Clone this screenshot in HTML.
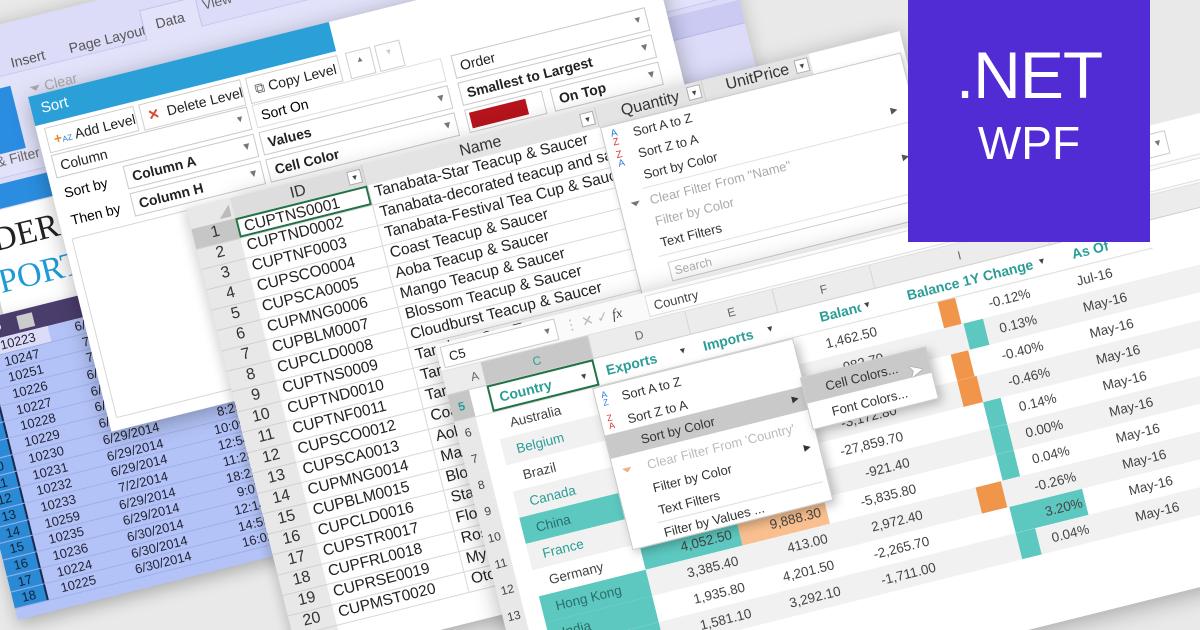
<!DOCTYPE html>
<html><head><meta charset="utf-8"><style>
*{margin:0;padding:0;box-sizing:border-box}
html{width:1200px;height:630px;overflow:hidden}
body{width:1200px;height:630px;overflow:hidden;background:#e9e9e9;font-family:"Liberation Sans",sans-serif;position:relative}
.a{position:absolute}
.p{position:absolute;transform-origin:0 0;transform:rotate(-14deg)}
.r{position:absolute;left:0;display:flex;white-space:nowrap}
.r>div{height:100%;overflow:hidden;position:relative}
.dd{position:absolute;border:1px solid #c9c9c9;background:#fff;font-size:14px;color:#222;padding:3px 6px;white-space:nowrap}
.dd:after{content:"▾";position:absolute;right:6px;top:3px;color:#777;font-size:11px}
.btn{position:absolute;border:1px solid #cfcfcf;background:#fff;font-size:14px;color:#222;padding:4px 6px;white-space:nowrap}
.mi{position:absolute;font-size:13px;color:#333;white-space:nowrap}
.fa{display:inline-block;width:14px;height:14px;border:1px solid #aaa;background:#fff;font-size:9px;line-height:12px;text-align:center;color:#444;position:absolute}
</style></head><body>
<div class="a" style="left:0;top:0;width:1200px;height:630px;overflow:hidden">

<!-- Panel A: left spreadsheet -->
<div class="p" style="left:-60px;top:60px;width:790px;height:560px;">
  <div class="a" style="left:0;top:-20px;width:790px;height:285px;background:#dcdcf8;box-shadow:0 0 18px rgba(0,0,0,.2)"></div>
  <div class="a" style="left:0;top:30px;width:790px;height:100px;background:#e2e2fa;border-top:1px solid #c8c8ee;border-bottom:1px solid #c8c8ee"></div>
  <div class="a" style="left:68px;top:12px;font-size:14px;color:#555">Insert</div>
  <div class="a" style="left:128px;top:12px;font-size:14px;color:#555">Page Layout</div>
  <div class="a" style="left:205px;top:0;width:58px;height:31px;border:1px solid #c3c3e8;border-bottom:none;background:#e2e2fa;font-size:14px;color:#555;padding:8px 0 0 12px">Data</div>
  <div class="a" style="left:268px;top:2px;font-size:14px;color:#666">View</div>
  <div class="a" style="left:28px;top:42px;width:34px;height:64px;background:#2b8de0"></div>
  <div class="a" style="left:80px;top:42px;font-size:14px;color:#aaa">⏷ Clear</div>
  <div class="a" style="left:30px;top:105px;font-size:14px;color:#666">&amp; Filter</div>
  <div class="a" style="left:0;top:135px;width:790px;height:24px;background:#cacaf2;border-bottom:1px solid #b8b8e6"></div>
  <div class="a" style="left:0;top:135px;width:120px;height:24px;background:#2b8de0"></div>
  <div class="a" style="left:600px;top:135px;width:92px;height:24px;background:#2b8de0;color:#123;font-size:13px;text-align:center;line-height:24px">H</div>
  <div class="a" style="left:0;top:160px;width:400px;height:105px;background:#fff"></div>
  <div class="a" style="left:-40px;top:170px;font-family:'Liberation Serif',serif;font-size:34px;color:#222">ORDERS</div>
  <div class="a" style="left:-40px;top:212px;font-family:'Liberation Serif',serif;font-size:34px;color:#1e9ad6">REPORT</div>
  <div class="a" style="left:-60px;top:262px;width:275px;height:300px;background:#b3c3f7;box-shadow:0 6px 16px rgba(0,0,0,.25)"></div>
  <div class="r" style="left:-60px;top:262px;height:22px;width:275px;background:#4a3d6c;color:#fff;font-size:12px;font-weight:bold">
    <div style="width:35px;background:#1e2a4c"></div><div style="width:65px;padding:4px 0 0 8px">ID <span style="display:inline-block;width:16px;height:14px;background:#ccc;vertical-align:middle;margin-left:14px"></span></div>
  </div>
  <div class="a" style="left:-60px;top:284px;width:275px;font-size:13px;color:#223">
    <div style="display:flex;height:16.7px;border-bottom:1px solid #9fb0e8"><div style="width:35px;background:#2a8ad6;border-right:2px solid #1d2a4a;text-align:center;color:#123">3</div><div style="width:65px;text-align:center;background:#dcdcf8">10223</div><div style="width:110px;text-align:center">6/30/2014</div><div style="width:65px;text-align:right;padding-right:6px">9:12</div></div>
    <div style="display:flex;height:16.7px;border-bottom:1px solid #9fb0e8"><div style="width:35px;background:#2a8ad6;border-right:2px solid #1d2a4a;text-align:center;color:#123">4</div><div style="width:65px;text-align:center">10247</div><div style="width:110px;text-align:center">7/1/2014</div><div style="width:65px;text-align:right;padding-right:6px">11:05</div></div>
    <div style="display:flex;height:16.7px;border-bottom:1px solid #9fb0e8"><div style="width:35px;background:#2a8ad6;border-right:2px solid #1d2a4a;text-align:center;color:#123">5</div><div style="width:65px;text-align:center">10251</div><div style="width:110px;text-align:center">7/1/2014</div><div style="width:65px;text-align:right;padding-right:6px">13:48</div></div>
    <div style="display:flex;height:16.7px;border-bottom:1px solid #9fb0e8"><div style="width:35px;background:#2a8ad6;border-right:2px solid #1d2a4a;text-align:center;color:#123">6</div><div style="width:65px;text-align:center">10226</div><div style="width:110px;text-align:center">6/30/2014</div><div style="width:65px;text-align:right;padding-right:6px">16:20</div></div>
    <div style="display:flex;height:16.7px;border-bottom:1px solid #9fb0e8"><div style="width:35px;background:#2a8ad6;border-right:2px solid #1d2a4a;text-align:center;color:#123">7</div><div style="width:65px;text-align:center">10227</div><div style="width:110px;text-align:center">6/30/2014</div><div style="width:65px;text-align:right;padding-right:6px">8:55</div></div>
    <div style="display:flex;height:16.7px;border-bottom:1px solid #9fb0e8"><div style="width:35px;background:#2a8ad6;border-right:2px solid #1d2a4a;text-align:center;color:#123">8</div><div style="width:65px;text-align:center">10228</div><div style="width:110px;text-align:center">6/29/2014</div><div style="width:65px;text-align:right;padding-right:6px">10:31</div></div>
    <div style="display:flex;height:16.7px;border-bottom:1px solid #9fb0e8"><div style="width:35px;background:#2a8ad6;border-right:2px solid #1d2a4a;text-align:center;color:#123">9</div><div style="width:65px;text-align:center">10229</div><div style="width:110px;text-align:center">6/29/2014</div><div style="width:65px;text-align:right;padding-right:6px">14:40</div></div>
    <div style="display:flex;height:16.7px;border-bottom:1px solid #9fb0e8"><div style="width:35px;background:#2a8ad6;border-right:2px solid #1d2a4a;text-align:center;color:#123">10</div><div style="width:65px;text-align:center">10230</div><div style="width:110px;text-align:center">6/29/2014</div><div style="width:65px;text-align:right;padding-right:6px">8:25</div></div>
    <div style="display:flex;height:16.7px;border-bottom:1px solid #9fb0e8"><div style="width:35px;background:#2a8ad6;border-right:2px solid #1d2a4a;text-align:center;color:#123">11</div><div style="width:65px;text-align:center">10231</div><div style="width:110px;text-align:center">6/29/2014</div><div style="width:65px;text-align:right;padding-right:6px">10:09</div></div>
    <div style="display:flex;height:16.7px;border-bottom:1px solid #9fb0e8"><div style="width:35px;background:#2a8ad6;border-right:2px solid #1d2a4a;text-align:center;color:#123">12</div><div style="width:65px;text-align:center">10232</div><div style="width:110px;text-align:center">6/29/2014</div><div style="width:65px;text-align:right;padding-right:6px">12:54</div></div>
    <div style="display:flex;height:16.7px;border-bottom:1px solid #9fb0e8"><div style="width:35px;background:#2a8ad6;border-right:2px solid #1d2a4a;text-align:center;color:#123">13</div><div style="width:65px;text-align:center">10233</div><div style="width:110px;text-align:center">7/2/2014</div><div style="width:65px;text-align:right;padding-right:6px">11:28</div></div>
    <div style="display:flex;height:16.7px;border-bottom:1px solid #9fb0e8"><div style="width:35px;background:#2a8ad6;border-right:2px solid #1d2a4a;text-align:center;color:#123">14</div><div style="width:65px;text-align:center">10259</div><div style="width:110px;text-align:center">6/29/2014</div><div style="width:65px;text-align:right;padding-right:6px">18:22</div></div>
    <div style="display:flex;height:16.7px;border-bottom:1px solid #9fb0e8"><div style="width:35px;background:#2a8ad6;border-right:2px solid #1d2a4a;text-align:center;color:#123">15</div><div style="width:65px;text-align:center">10235</div><div style="width:110px;text-align:center">6/29/2014</div><div style="width:65px;text-align:right;padding-right:6px">9:07</div></div>
    <div style="display:flex;height:16.7px;border-bottom:1px solid #9fb0e8"><div style="width:35px;background:#2a8ad6;border-right:2px solid #1d2a4a;text-align:center;color:#123">16</div><div style="width:65px;text-align:center">10236</div><div style="width:110px;text-align:center">6/30/2014</div><div style="width:65px;text-align:right;padding-right:6px">12:14</div></div>
    <div style="display:flex;height:16.7px;border-bottom:1px solid #9fb0e8"><div style="width:35px;background:#2a8ad6;border-right:2px solid #1d2a4a;text-align:center;color:#123">17</div><div style="width:65px;text-align:center">10224</div><div style="width:110px;text-align:center">6/30/2014</div><div style="width:65px;text-align:right;padding-right:6px">14:55</div></div>
    <div style="display:flex;height:16.7px;border-bottom:1px solid #9fb0e8"><div style="width:35px;background:#2a8ad6;border-right:2px solid #1d2a4a;text-align:center;color:#123">18</div><div style="width:65px;text-align:center">10225</div><div style="width:110px;text-align:center">6/30/2014</div><div style="width:65px;text-align:right;padding-right:6px">16:02</div></div>
  </div>
</div>

<!-- Panel B: Sort dialog -->
<div class="p" style="left:28px;top:97px;width:640px;height:345px;background:#fff;box-shadow:0 4px 22px rgba(0,0,0,.3)">
  <div class="a" style="left:0;top:0;width:310px;height:30px;background:#2b9fd8;color:#fff;font-size:15px;padding:6px 10px">Sort</div>
  <div class="btn" style="left:8px;top:34px;width:92px"><span style="color:#e8892b;font-weight:bold">+</span><span style="font-size:8px;color:#2b7fd8">AZ</span> Add Level</div>
  <div class="btn" style="left:105px;top:34px;width:105px"><span style="color:#d84a2b;font-weight:bold">✕</span>&nbsp; Delete Level</div>
  <div class="btn" style="left:215px;top:34px;width:95px"><span style="color:#666">⧉</span> Copy Level</div>
  <div class="btn" style="left:318px;top:34px;width:26px;height:27px;font-size:8px;color:#777;text-align:center">▲</div>
  <div class="btn" style="left:348px;top:34px;width:26px;height:27px;font-size:8px;color:#ccc;text-align:center">▼</div>
  <div class="dd" style="left:8px;top:62px;width:202px;height:24px">Column</div>
  <div class="a" style="left:215px;top:62px;width:195px;height:24px;border:1px solid #ddd;font-size:14px;padding:3px 6px">Sort On</div>
  <div class="dd" style="left:420px;top:62px;width:200px;height:24px">Order</div>
  <div class="a" style="left:12px;top:94px;font-size:14px">Sort by</div>
  <div class="dd" style="left:75px;top:90px;width:135px;height:24px;font-weight:bold">Column A</div>
  <div class="dd" style="left:215px;top:90px;width:195px;height:24px;font-weight:bold">Values</div>
  <div class="dd" style="left:420px;top:90px;width:200px;height:24px;font-weight:bold">Smallest to Largest</div>
  <div class="a" style="left:12px;top:122px;font-size:14px">Then by</div>
  <div class="dd" style="left:75px;top:118px;width:135px;height:24px;font-weight:bold">Column H</div>
  <div class="dd" style="left:215px;top:118px;width:195px;height:24px;font-weight:bold">Cell Color</div>
  <div class="a" style="left:420px;top:118px;width:80px;height:24px;border:1px solid #ccc;background:#fff"><div style="margin:3px;width:58px;height:16px;background:#b5141c"></div></div>
  <div class="dd" style="left:508px;top:118px;width:112px;height:24px;font-weight:bold">On Top</div>
  <div class="a" style="left:8px;top:148px;width:620px;height:185px;border:1px solid #d6d6d6"></div>
</div>

<!-- Panel C: ID / Name grid -->
<div class="p" style="left:230px;top:198px;width:690px;height:470px;background:#fff;box-shadow:0 4px 22px rgba(0,0,0,.3)">
  <div class="a" style="left:-45px;top:0;width:45px;height:470px;background:#e8e8e8;box-shadow:-4px 0 10px rgba(0,0,0,.15)"></div>
  <div class="a" style="left:-45px;top:0;width:45px;height:21px;background:#e8e8e8"><div style="position:absolute;right:3px;bottom:3px;width:0;height:0;border-left:12px solid transparent;border-bottom:12px solid #bbb"></div></div>
  <div class="r" style="top:0;height:21px;font-size:16px;color:#333;background:#ddd">
    <div style="width:136px;text-align:center;line-height:21px;border-right:1px solid #ccc">ID<span class="fa" style="right:2px;top:3px">▾</span></div>
    <div style="width:240px;text-align:center;line-height:21px;border-right:1px solid #ccc;background:#e4e4e4">Name<span class="fa" style="right:2px;top:3px">▾</span></div>
    <div style="width:110px;text-align:center;line-height:21px;border-right:1px solid #ccc;background:#e4e4e4">Quantity<span class="fa" style="right:2px;top:3px">▾</span></div>
    <div style="width:110px;text-align:center;line-height:21px;background:#e4e4e4">UnitPrice<span class="fa" style="right:2px;top:3px">▾</span></div>
  </div>
  <div class="a" style="left:0;top:21px;width:376px;font-size:15.5px;color:#222">
    <div style="display:flex;height:21px;border-bottom:1px solid #d8d8d8"><div style="width:136px;padding-left:5px;border:2px solid #217346">CUPTNS0001</div><div style="width:240px;padding-left:5px;border-left:1px solid #d8d8d8">Tanabata-Star Teacup &amp; Saucer</div></div>
    <div style="display:flex;height:21px;border-bottom:1px solid #d8d8d8"><div style="width:136px;padding-left:5px">CUPTND0002</div><div style="width:240px;padding-left:5px;border-left:1px solid #d8d8d8;overflow:hidden;white-space:nowrap">Tanabata-decorated teacup and saucer</div></div>
    <div style="display:flex;height:21px;border-bottom:1px solid #d8d8d8"><div style="width:136px;padding-left:5px">CUPTNF0003</div><div style="width:240px;padding-left:5px;border-left:1px solid #d8d8d8;white-space:nowrap;overflow:hidden">Tanabata-Festival Tea Cup &amp; Saucer</div></div>
    <div style="display:flex;height:21px;border-bottom:1px solid #d8d8d8"><div style="width:136px;padding-left:5px">CUPSCO0004</div><div style="width:240px;padding-left:5px;border-left:1px solid #d8d8d8">Coast Teacup &amp; Saucer</div></div>
    <div style="display:flex;height:21px;border-bottom:1px solid #d8d8d8"><div style="width:136px;padding-left:5px">CUPSCA0005</div><div style="width:240px;padding-left:5px;border-left:1px solid #d8d8d8">Aoba Teacup &amp; Saucer</div></div>
    <div style="display:flex;height:21px;border-bottom:1px solid #d8d8d8"><div style="width:136px;padding-left:5px">CUPMNG0006</div><div style="width:240px;padding-left:5px;border-left:1px solid #d8d8d8">Mango Teacup &amp; Saucer</div></div>
    <div style="display:flex;height:21px;border-bottom:1px solid #d8d8d8"><div style="width:136px;padding-left:5px">CUPBLM0007</div><div style="width:240px;padding-left:5px;border-left:1px solid #d8d8d8">Blossom Teacup &amp; Saucer</div></div>
    <div style="display:flex;height:21px;border-bottom:1px solid #d8d8d8"><div style="width:136px;padding-left:5px">CUPCLD0008</div><div style="width:240px;padding-left:5px;border-left:1px solid #d8d8d8">Cloudburst Teacup &amp; Saucer</div></div>
    <div style="display:flex;height:21px;border-bottom:1px solid #d8d8d8"><div style="width:136px;padding-left:5px">CUPTNS0009</div><div style="width:240px;padding-left:5px;border-left:1px solid #d8d8d8">Tanabata-Star Teacup</div></div>
    <div style="display:flex;height:21px;border-bottom:1px solid #d8d8d8"><div style="width:136px;padding-left:5px">CUPTND0010</div><div style="width:240px;padding-left:5px;border-left:1px solid #d8d8d8">Tanabata-decorated</div></div>
    <div style="display:flex;height:21px;border-bottom:1px solid #d8d8d8"><div style="width:136px;padding-left:5px">CUPTNF0011</div><div style="width:240px;padding-left:5px;border-left:1px solid #d8d8d8">Tanabata-Festival</div></div>
    <div style="display:flex;height:21px;border-bottom:1px solid #d8d8d8"><div style="width:136px;padding-left:5px">CUPSCO0012</div><div style="width:240px;padding-left:5px;border-left:1px solid #d8d8d8">Coast Teacup</div></div>
    <div style="display:flex;height:21px;border-bottom:1px solid #d8d8d8"><div style="width:136px;padding-left:5px">CUPSCA0013</div><div style="width:240px;padding-left:5px;border-left:1px solid #d8d8d8">Aoba Teacup</div></div>
    <div style="display:flex;height:21px;border-bottom:1px solid #d8d8d8"><div style="width:136px;padding-left:5px">CUPMNG0014</div><div style="width:240px;padding-left:5px;border-left:1px solid #d8d8d8">Mango Teacup</div></div>
    <div style="display:flex;height:21px;border-bottom:1px solid #d8d8d8"><div style="width:136px;padding-left:5px">CUPBLM0015</div><div style="width:240px;padding-left:5px;border-left:1px solid #d8d8d8">Blossom Teacup</div></div>
    <div style="display:flex;height:21px;border-bottom:1px solid #d8d8d8"><div style="width:136px;padding-left:5px">CUPCLD0016</div><div style="width:240px;padding-left:5px;border-left:1px solid #d8d8d8">Starlight Teacup</div></div>
    <div style="display:flex;height:21px;border-bottom:1px solid #d8d8d8"><div style="width:136px;padding-left:5px">CUPSTR0017</div><div style="width:240px;padding-left:5px;border-left:1px solid #d8d8d8">Floral Teacup</div></div>
    <div style="display:flex;height:21px;border-bottom:1px solid #d8d8d8"><div style="width:136px;padding-left:5px">CUPFRL0018</div><div style="width:240px;padding-left:5px;border-left:1px solid #d8d8d8">Rose Teacup</div></div>
    <div style="display:flex;height:21px;border-bottom:1px solid #d8d8d8"><div style="width:136px;padding-left:5px">CUPRSE0019</div><div style="width:240px;padding-left:5px;border-left:1px solid #d8d8d8">Mystic Teacup</div></div>
    <div style="display:flex;height:21px;border-bottom:1px solid #d8d8d8"><div style="width:136px;padding-left:5px">CUPMST0020</div><div style="width:240px;padding-left:5px;border-left:1px solid #d8d8d8">Otomi Teacup</div></div>
  </div>
  <div class="a" style="left:-45px;top:21px;width:45px;font-size:16px;color:#333;text-align:center">
    <div style="height:21px;background:#c6c6c6;border-bottom:1px solid #d0d0d0">1</div><div style="height:21px;border-bottom:1px solid #d0d0d0">2</div><div style="height:21px;border-bottom:1px solid #d0d0d0">3</div><div style="height:21px;border-bottom:1px solid #d0d0d0">4</div><div style="height:21px;border-bottom:1px solid #d0d0d0">5</div><div style="height:21px;border-bottom:1px solid #d0d0d0">6</div><div style="height:21px;border-bottom:1px solid #d0d0d0">7</div><div style="height:21px;border-bottom:1px solid #d0d0d0">8</div><div style="height:21px;border-bottom:1px solid #d0d0d0">9</div><div style="height:21px;border-bottom:1px solid #d0d0d0">10</div><div style="height:21px;border-bottom:1px solid #d0d0d0">11</div><div style="height:21px;border-bottom:1px solid #d0d0d0">12</div><div style="height:21px;border-bottom:1px solid #d0d0d0">13</div><div style="height:21px;border-bottom:1px solid #d0d0d0">14</div><div style="height:21px;border-bottom:1px solid #d0d0d0">15</div><div style="height:21px;border-bottom:1px solid #d0d0d0">16</div><div style="height:21px;border-bottom:1px solid #d0d0d0">17</div><div style="height:21px;border-bottom:1px solid #d0d0d0">18</div><div style="height:21px;border-bottom:1px solid #d0d0d0">19</div><div style="height:21px;border-bottom:1px solid #d0d0d0">20</div>
  </div>
  <div class="a" style="left:376px;top:21px;width:310px;height:190px;background:#fff;border:1px solid #c8c8c8;box-shadow:2px 3px 8px rgba(0,0,0,.2)">
    <div class="mi" style="left:8px;top:4px;font-size:10px;line-height:9px;color:#2b7fd8">A<br><span style="color:#d33">Z</span></div>
    <div class="mi" style="left:30px;top:4px">Sort A to Z</div>
    <div class="mi" style="left:8px;top:26px;font-size:10px;line-height:9px;color:#d33">Z<br><span style="color:#2b7fd8">A</span></div>
    <div class="mi" style="left:30px;top:26px">Sort Z to A</div>
    <div class="mi" style="left:30px;top:48px">Sort by Color</div>
    <div class="mi" style="left:285px;top:48px;font-size:9px;color:#555">▶</div>
    <div class="a" style="left:25px;top:68px;width:280px;height:1px;background:#e0e0e0"></div>
    <div class="mi" style="left:10px;top:74px;color:#777">⏷</div>
    <div class="mi" style="left:30px;top:74px;color:#aaa">Clear Filter From "Name"</div>
    <div class="mi" style="left:30px;top:96px;color:#aaa">Filter by Color</div>
    <div class="mi" style="left:285px;top:96px;font-size:9px;color:#555">▶</div>
    <div class="mi" style="left:30px;top:118px">Text Filters</div>
    <div class="a" style="left:25px;top:138px;width:280px;height:1px;background:#e0e0e0"></div>
    <div class="a" style="left:32px;top:146px;width:270px;height:20px;border:1px solid #ccc;font-size:12px;color:#aaa;padding:2px 4px">Search</div>
  </div>
</div>

<!-- Panel D: Country sheet -->
<div class="p" style="left:435px;top:345px;width:900px;height:420px;background:#fff;box-shadow:0 4px 24px rgba(0,0,0,.3)">
  <div class="a" style="left:560px;top:-40px;width:340px;height:40px;background:#fff;border-bottom:1px solid #ddd"></div>
  <div class="dd" style="left:650px;top:-32px;width:110px;height:24px"></div>
  <div class="a" style="left:0;top:0;width:900px;height:28px;background:#fafafa;border-bottom:1px solid #ddd"></div>
  <div class="dd" style="left:4px;top:3px;width:118px;height:22px;font-size:13px">C5</div>
  <div class="a" style="left:130px;top:5px;font-size:14px;color:#bbb">⋮ ✕ ✓ <i style="color:#444;font-family:'Liberation Serif',serif">fx</i></div>
  <div class="a" style="left:215px;top:3px;width:690px;height:22px;border:1px solid #ddd;background:#fff;font-size:13px;color:#444;padding:3px 6px">Country</div>
  <div class="r" style="top:28px;height:24px;font-size:12px;color:#666;background:#ececec;border-bottom:1px solid #d0d0d0">
    <div style="width:22px"></div><div style="width:18px;text-align:center;line-height:24px">A</div>
    <div style="width:110px;text-align:center;line-height:24px;background:#c8c8c8;color:#2a9d96">C</div>
    <div style="width:100px;text-align:center;line-height:24px;border-left:1px solid #d5d5d5">D</div>
    <div style="width:90px;text-align:center;line-height:24px;border-left:1px solid #d5d5d5">E</div>
    <div style="width:100px;text-align:center;line-height:24px;border-left:1px solid #d5d5d5">F</div>
    <div style="width:180px;text-align:center;line-height:24px;border-left:1px solid #d5d5d5">I</div>
    <div style="width:100px;border-left:1px solid #d5d5d5"></div><div style="width:200px;border-left:1px solid #d5d5d5"></div>
  </div>
  <div class="r" style="top:52px;height:28px;font-size:14px;color:#2a9d96;font-weight:bold;border-bottom:1px solid #ddd">
    <div style="width:22px;background:#c6c6c6;text-align:center;line-height:28px;font-size:12px">5</div><div style="width:18px"></div>
    <div style="width:110px;border:2px solid #217346;line-height:24px;padding-left:8px">Country<span class="fa" style="right:4px;top:6px;border:none">▾</span></div>
    <div style="width:100px;line-height:28px;padding-left:10px">Exports<span class="fa" style="right:4px;top:7px;border:none">▾</span></div>
    <div style="width:90px;line-height:28px;padding-left:10px">Imports<span class="fa" style="right:4px;top:7px;border:none">▾</span></div>
    <div style="width:100px;line-height:28px;padding-left:40px">Balance<span class="fa" style="right:4px;top:7px;border:none">▾</span></div>
    <div style="width:180px;line-height:28px;padding-left:30px">Balance 1Y Change<span class="fa" style="right:4px;top:7px;border:none">▾</span></div>
    <div style="width:100px;line-height:28px;padding-left:20px">As Of<span class="fa" style="right:4px;top:7px;border:none">▾</span></div>
  </div>
  <div class="a" style="left:0;top:80px;width:900px;font-size:13.5px;color:#444">
    <div class="r" style="position:relative;height:27px"><div style="width:22px;background:#e8e8e8;text-align:center;line-height:27px;font-size:12px">6</div><div style="width:18px"></div><div style="width:110px;padding-left:14px;line-height:27px">Australia</div><div style="width:100px"></div><div style="width:90px"></div><div style="width:100px;text-align:right;padding-right:8px;line-height:27px">1,462.50</div><div style="width:180px"><div class="a" style="left:58px;top:0;width:18px;height:27px;background:#f0954a"></div><div class="a" style="right:30px;top:6px">-0.12%</div></div><div style="width:100px;padding-left:18px;line-height:27px">Jul-16</div></div>
    <div class="r" style="position:relative;height:27px;background:#f1f1f1"><div style="width:22px;background:#e8e8e8;text-align:center;line-height:27px;font-size:12px">7</div><div style="width:18px;background:#fff"></div><div style="width:110px;padding-left:14px;line-height:27px;color:#2a9d96">Belgium</div><div style="width:100px"></div><div style="width:90px"></div><div style="width:100px;text-align:right;padding-right:8px;line-height:27px">982.70</div><div style="width:180px"><div class="a" style="left:78px;top:0;width:20px;height:27px;background:#5cc8c0"></div><div class="a" style="right:30px;top:6px">0.13%</div></div><div style="width:100px;padding-left:18px;line-height:27px">May-16</div></div>
    <div class="r" style="position:relative;height:27px"><div style="width:22px;background:#e8e8e8;text-align:center;line-height:27px;font-size:12px">8</div><div style="width:18px"></div><div style="width:110px;padding-left:14px;line-height:27px">Brazil</div><div style="width:100px"></div><div style="width:90px"></div><div style="width:100px;text-align:right;padding-right:8px;line-height:27px">1,030.00</div><div style="width:180px"><div class="a" style="left:58px;top:0;width:18px;height:27px;background:#f0954a"></div><div class="a" style="right:30px;top:6px">-0.40%</div></div><div style="width:100px;padding-left:18px;line-height:27px">May-16</div></div>
    <div class="r" style="position:relative;height:27px;background:#f1f1f1"><div style="width:22px;background:#e8e8e8;text-align:center;line-height:27px;font-size:12px">9</div><div style="width:18px;background:#fff"></div><div style="width:110px;padding-left:14px;line-height:27px;color:#2a9d96">Canada</div><div style="width:100px"></div><div style="width:90px"></div><div style="width:100px;text-align:right;padding-right:8px;line-height:27px">-3,172.80</div><div style="width:180px"><div class="a" style="left:58px;top:0;width:20px;height:27px;background:#f0954a"></div><div class="a" style="right:30px;top:6px">-0.46%</div></div><div style="width:100px;padding-left:18px;line-height:27px">May-16</div></div>
    <div class="r" style="position:relative;height:27px"><div style="width:22px;background:#e8e8e8;text-align:center;line-height:27px;font-size:12px">10</div><div style="width:18px"></div><div style="width:110px;padding-left:14px;line-height:27px;background:#5cc8c0;color:#2a6e6a">China</div><div style="width:100px"></div><div style="width:90px"></div><div style="width:100px;text-align:right;padding-right:8px;line-height:27px">-27,859.70</div><div style="width:180px"><div class="a" style="left:78px;top:0;width:18px;height:27px;background:#5cc8c0"></div><div class="a" style="right:30px;top:6px">0.14%</div></div><div style="width:100px;padding-left:18px;line-height:27px">May-16</div></div>
    <div class="r" style="position:relative;height:27px;background:#f1f1f1"><div style="width:22px;background:#e8e8e8;text-align:center;line-height:27px;font-size:12px">11</div><div style="width:18px;background:#fff"></div><div style="width:110px;padding-left:14px;line-height:27px;color:#2a9d96">France</div><div style="width:100px"></div><div style="width:90px"></div><div style="width:100px;text-align:right;padding-right:8px;line-height:27px">-921.40</div><div style="width:180px"><div class="a" style="left:78px;top:0;width:18px;height:27px;background:#5cc8c0"></div><div class="a" style="right:30px;top:6px">0.00%</div></div><div style="width:100px;padding-left:18px;line-height:27px">May-16</div></div>
    <div class="r" style="position:relative;height:27px"><div style="width:22px;background:#e8e8e8;text-align:center;line-height:27px;font-size:12px">12</div><div style="width:18px"></div><div style="width:110px;padding-left:14px;line-height:27px">Germany</div><div style="width:100px;text-align:right;padding-right:8px;line-height:27px;background:#5cc8c0">4,052.50</div><div style="width:90px;text-align:right;padding-right:6px;line-height:27px;background:#f9bf8e">9,888.30</div><div style="width:100px;text-align:right;padding-right:8px;line-height:27px">-5,835.80</div><div style="width:180px"><div class="a" style="left:78px;top:0;width:18px;height:27px;background:#5cc8c0"></div><div class="a" style="right:30px;top:6px">0.04%</div></div><div style="width:100px;padding-left:18px;line-height:27px">May-16</div></div>
    <div class="r" style="position:relative;height:27px;background:#f1f1f1"><div style="width:22px;background:#e8e8e8;text-align:center;line-height:27px;font-size:12px">13</div><div style="width:18px;background:#fff"></div><div style="width:110px;padding-left:14px;line-height:27px;background:#5cc8c0;color:#2a6e6a">Hong Kong</div><div style="width:100px;text-align:right;padding-right:8px;line-height:27px">3,385.40</div><div style="width:90px;text-align:right;padding-right:6px;line-height:27px">413.00</div><div style="width:100px;text-align:right;padding-right:8px;line-height:27px">2,972.40</div><div style="width:180px"><div class="a" style="left:50px;top:0;width:26px;height:27px;background:#f0954a"></div><div class="a" style="right:30px;top:6px">-0.26%</div></div><div style="width:100px;padding-left:18px;line-height:27px">May-16</div></div>
    <div class="r" style="position:relative;height:27px"><div style="width:22px;background:#e8e8e8;text-align:center;line-height:27px;font-size:12px">14</div><div style="width:18px"></div><div style="width:110px;padding-left:14px;line-height:27px;background:#5cc8c0;color:#2a6e6a">India</div><div style="width:100px;text-align:right;padding-right:8px;line-height:27px">1,935.80</div><div style="width:90px;text-align:right;padding-right:6px;line-height:27px">4,201.50</div><div style="width:100px;text-align:right;padding-right:8px;line-height:27px">-2,265.70</div><div style="width:180px"><div class="a" style="left:78px;top:0;width:75px;height:27px;background:#5cc8c0"></div><div class="a" style="right:30px;top:6px">3.20%</div></div><div style="width:100px;padding-left:18px;line-height:27px">May-16</div></div>
    <div class="r" style="position:relative;height:27px;background:#f1f1f1"><div style="width:22px;background:#e8e8e8;text-align:center;line-height:27px;font-size:12px">15</div><div style="width:18px;background:#fff"></div><div style="width:110px;padding-left:14px;line-height:27px;background:#5cc8c0;color:#2a6e6a">Italy</div><div style="width:100px;text-align:right;padding-right:8px;line-height:27px">1,581.10</div><div style="width:90px;text-align:right;padding-right:6px;line-height:27px">3,292.10</div><div style="width:100px;text-align:right;padding-right:8px;line-height:27px">-1,711.00</div><div style="width:180px"><div class="a" style="left:78px;top:0;width:20px;height:27px;background:#5cc8c0"></div><div class="a" style="right:30px;top:6px">0.04%</div></div><div style="width:100px;padding-left:18px;line-height:27px">May-16</div></div>
  </div>
  <div class="a" style="left:142px;top:80px;width:207px;height:167px;background:#fff;border:1px solid #c8c8c8;box-shadow:3px 4px 10px rgba(0,0,0,.25);font-size:13px;color:#333">
    <div class="mi" style="left:6px;top:4px;font-size:9px;line-height:8px;color:#2b7fd8">A<br>Z</div>
    <div class="mi" style="left:26px;top:6px">Sort A to Z</div>
    <div class="mi" style="left:6px;top:28px;font-size:9px;line-height:8px;color:#d33">Z<br>A</div>
    <div class="mi" style="left:26px;top:30px">Sort Z to A</div>
    <div class="a" style="left:0;top:48px;width:205px;height:24px;background:#c9c9c9"></div>
    <div class="mi" style="left:34px;top:53px">Sort by Color</div>
    <div class="mi" style="left:190px;top:53px;font-size:9px">▶</div>
    <div class="mi" style="left:8px;top:79px;color:#f0b080">⏷</div>
    <div class="mi" style="left:34px;top:79px;color:#bbb">Clear Filter From 'Country'</div>
    <div class="mi" style="left:34px;top:103px">Filter by Color</div>
    <div class="mi" style="left:190px;top:103px;font-size:9px">▶</div>
    <div class="mi" style="left:34px;top:126px">Text Filters</div>
    <div class="a" style="left:30px;top:145px;width:170px;height:1px;background:#ddd"></div>
    <div class="mi" style="left:34px;top:149px">Filter by Values ...</div>
  </div>
  <div class="a" style="left:346px;top:120px;width:130px;height:54px;background:#fff;border:1px solid #c8c8c8;box-shadow:3px 4px 10px rgba(0,0,0,.25);font-size:13px;color:#333">
    <div class="a" style="left:0;top:0;width:128px;height:26px;background:#c9c9c9"></div>
    <div class="mi" style="left:22px;top:6px">Cell Colors...</div>
    <div class="mi" style="left:22px;top:32px">Font Colors...</div>
    <div class="mi" style="left:106px;top:10px;font-size:18px;color:#fff;text-shadow:0 0 1px #333">➤</div>
  </div>
</div>

<div class="a" style="left:908px;top:0;width:242px;height:242px;background:#512bd4;color:#fff;text-align:center">
  <div style="font-size:66px;line-height:66px;margin-top:42px;letter-spacing:-1px">.NET</div>
  <div style="font-size:46px;line-height:46px;margin-top:12px">WPF</div>
</div>
</div>
</body></html>
